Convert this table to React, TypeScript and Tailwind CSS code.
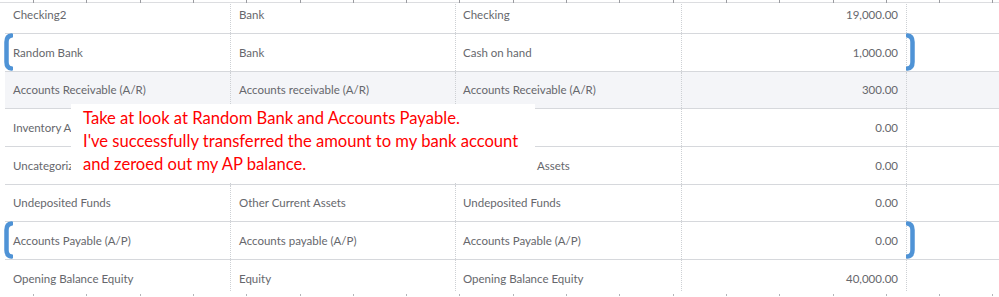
const rows = [
  { name: "Checking2", type: "Bank", detail: "Checking", balance: "19,000.00" },
  { name: "Random Bank", type: "Bank", detail: "Cash on hand", balance: "1,000.00", mark: true },
  { name: "Accounts Receivable (A/R)", type: "Accounts receivable (A/R)", detail: "Accounts Receivable (A/R)", balance: "300.00", hover: true },
  { name: "Inventory Asset", type: "Other Current Assets", detail: "Inventory", balance: "0.00" },
  { name: "Uncategorized Asset", type: "Other Current Assets", detail: "Other Current Assets", balance: "0.00" },
  { name: "Undeposited Funds", type: "Other Current Assets", detail: "Undeposited Funds", balance: "0.00" },
  { name: "Accounts Payable (A/P)", type: "Accounts payable (A/P)", detail: "Accounts Payable (A/P)", balance: "0.00", mark: true },
  { name: "Opening Balance Equity", type: "Equity", detail: "Opening Balance Equity", balance: "40,000.00" },
];

const ticks = Array.from({ length: 19 }, (_, i) => 33 + i * 53.3);

function Bracket({ side }: { side: "left" | "right" }) {
  const d = side === "left" ? "M9.5 2.5 Q4.5 3 4.5 9 L4.5 29 Q4.5 35 9.5 35.5" : "M1.5 2.5 Q6.5 3 6.5 9 L6.5 29 Q6.5 35 1.5 35.5";
  return (
    <svg width="11" height="38" viewBox="0 0 11 38" className="absolute top-[-1px]" style={side === "left" ? { left: -3 } : { left: -1 }}>
      <path d={d} fill="none" stroke="#4f93d6" strokeWidth="4.5" strokeLinecap="round" />
    </svg>
  );
}

export default function App() {
  return (
    <div className="relative w-[999px] h-[297px] overflow-hidden bg-white text-[11.5px] text-[#66676c]" style={{ fontFamily: "Lato, 'Open Sans', sans-serif" }}>
      <div className="flex -mt-[3.67px]">
        <div className="w-[5px] shrink-0" />
        <div className="flex-1">
          {rows.map((r) => (
            <div key={r.name} className={`relative flex h-[37.67px] items-center border-b border-[#d6d8dc] ${r.hover ? "bg-[#f4f5f8]" : "bg-white"}`}>
              {r.mark && <Bracket side="left" />}
              <div className="w-[226px] h-full flex items-center pl-[8px] border-r border-dotted border-[#cdd0d4] whitespace-nowrap overflow-hidden">{r.name}</div>
              <div className="w-[225px] h-full flex items-center pl-[8px] border-r border-dotted border-[#cdd0d4] whitespace-nowrap overflow-hidden">{r.type}</div>
              <div className="w-[226px] h-full flex items-center pl-[7px] border-r border-dotted border-[#cdd0d4] whitespace-nowrap overflow-hidden">{r.detail}</div>
              <div className="w-[225px] h-full flex items-center justify-end pr-[8px] border-r border-dotted border-[#cdd0d4]">{r.balance}</div>
              <div className="relative flex-1 h-full">{r.mark && <Bracket side="right" />}</div>
            </div>
          ))}
        </div>
      </div>

      {/* ruler fragments top and bottom */}
      <div className="absolute left-0 right-0 top-0 h-[3px] border-b border-[#dcdde0] bg-white">
        {ticks.map((x) => <div key={x} className="absolute top-0 w-px h-[3px] bg-[#9a9ba0]" style={{ left: x }} />)}
      </div>
      <div className="absolute left-0 right-0 bottom-0 h-[5px] bg-white">
        {ticks.map((x) => <div key={x} className="absolute top-[2px] w-px h-[2px] bg-[#b4b5b9]" style={{ left: x }} />)}
      </div>

      {/* annotation */}
      <div className="absolute left-[71px] top-[104px] w-[464px] h-[79px] bg-white pl-[12px] pt-[3px] text-[16.6px] leading-[23px] text-[#ff0000]" style={{ fontFamily: "Lato, 'Noto Sans', sans-serif" }}>
        <p>Take at look at Random Bank and Accounts Payable.</p>
        <p>I've successfully transferred the amount to my bank account</p>
        <p>and zeroed out my AP balance.</p>
      </div>
    </div>
  );
}
